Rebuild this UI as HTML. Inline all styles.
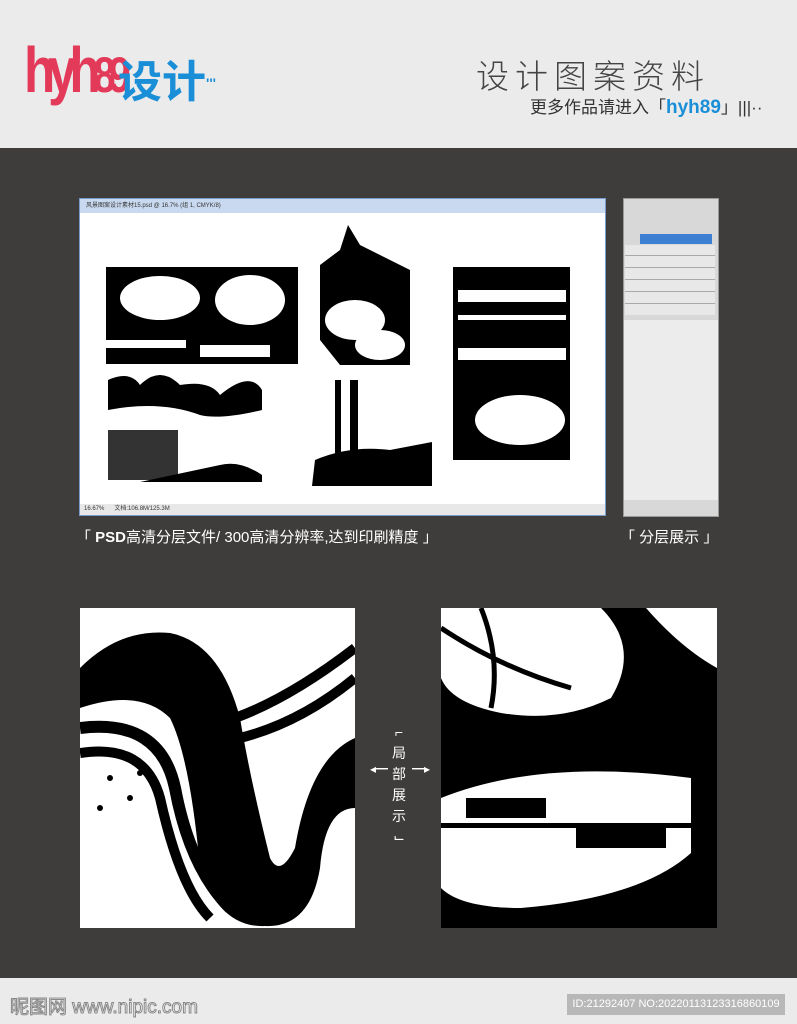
<!DOCTYPE html>
<html><head><meta charset="utf-8"><style>
html,body{margin:0;width:797px;height:1024px;overflow:hidden}
body{position:relative;background:#3f3d3b;font-family:"Liberation Sans","Noto Sans CJK SC",sans-serif}
.a{position:absolute}
</style></head><body>
<div class="a" style="left:0;top:0;width:797px;height:148px;background:#ebebeb"></div>
<div class="a" style="left:24px;top:30px;font-size:64px;font-weight:bold;color:#e33a5a;letter-spacing:-9px;line-height:80px;transform:scaleX(0.8);transform-origin:left">hyh<span style="font-size:50px">89</span></div>
<div class="a" style="left:118px;top:58px;font-size:44px;font-weight:bold;color:#1a8fd8;line-height:50px;white-space:nowrap">设计<span style="font-size:14px;vertical-align:top">'''</span></div>
<div class="a" style="left:476px;top:50px;font-size:33px;color:#444;letter-spacing:6px;font-family:'Noto Sans CJK SC',sans-serif;font-weight:300;white-space:nowrap">设计图案资料</div>
<div class="a" style="left:530px;top:93px;font-size:17px;color:#333;white-space:nowrap">更多作品请进入「<b style="color:#1a8fd8;font-size:19px">hyh89</b>」|||··</div>

<div class="a" style="left:79px;top:198px;width:527px;height:318px;background:#fff;border:1px solid #7a9ccc;box-sizing:border-box"></div>
<div class="a" style="left:80px;top:199px;width:525px;height:14px;background:#c9daf0;font-size:6px;color:#333;line-height:14px;padding-left:6px;box-sizing:border-box">风景图案设计素材15.psd @ 16.7% (组 1, CMYK/8)</div>
<div class="a" style="left:80px;top:504px;width:525px;height:11px;background:#e8e8e8;font-size:6px;color:#333;line-height:11px;padding-left:4px;box-sizing:border-box">16.67% &nbsp;&nbsp;&nbsp;&nbsp; 文档:106.8M/125.3M</div>
<svg class="a" style="left:100px;top:220px" width="480" height="275">
<rect x="6" y="47" width="192" height="97" fill="#000"/>
<ellipse cx="60" cy="78" rx="40" ry="22" fill="#fff"/><ellipse cx="150" cy="80" rx="35" ry="25" fill="#fff"/>
<rect x="6" y="120" width="80" height="8" fill="#fff"/><rect x="100" y="125" width="70" height="12" fill="#fff"/>
<path d="M220 45 L240 30 L248 5 L260 25 L290 40 L310 50 L310 145 L240 145 L220 120 Z" fill="#000"/>
<ellipse cx="255" cy="100" rx="30" ry="20" fill="#fff"/><ellipse cx="280" cy="125" rx="25" ry="15" fill="#fff"/>
<rect x="353" y="47" width="117" height="193" fill="#000"/>
<rect x="358" y="70" width="108" height="12" fill="#fff"/><rect x="358" y="128" width="108" height="12" fill="#fff"/><rect x="358" y="95" width="108" height="5" fill="#fff"/>
<ellipse cx="420" cy="200" rx="45" ry="25" fill="#fff"/>
<path d="M8 160 Q30 150 40 165 Q60 145 80 165 Q110 160 120 175 Q150 150 162 170 L162 190 Q120 200 100 195 Q60 180 8 190Z" fill="#000"/>
<rect x="8" y="210" width="70" height="50" fill="#000" opacity=".8"/>
<path d="M120 245 Q140 240 162 255 L162 262 L40 262Z" fill="#000"/>
<rect x="212" y="158" width="120" height="108" fill="#fff"/>
<path d="M215 240 Q250 225 290 230 L332 222 L332 266 L212 266Z" fill="#000"/>
<rect x="235" y="160" width="6" height="104" fill="#000"/><rect x="250" y="160" width="8" height="104" fill="#000"/>
</svg>
<div class="a" style="left:623px;top:198px;width:96px;height:319px;background:#d8d8d8;border:1px solid #999;box-sizing:border-box"></div>
<div class="a" style="left:640px;top:234px;width:72px;height:10px;background:#3d7fd3"></div>
<div class="a" style="left:625px;top:245px;width:90px;height:70px;background:repeating-linear-gradient(#e8e8e8 0 10px,#aaa 10px 11px,#e8e8e8 11px 12px)"></div>
<div class="a" style="left:624px;top:320px;width:94px;height:180px;background:#ececec"></div>
<div class="a" style="left:76px;top:526px;font-size:15px;color:#fff;white-space:nowrap">「 <b>PSD</b>高清分层文件/ 300高清分辨率,达到印刷精度 」</div>
<div class="a" style="left:620px;top:526px;font-size:15px;color:#fff;white-space:nowrap">「 分层展示 」</div>

<svg class="a" style="left:80px;top:608px" width="275" height="320">
<rect width="275" height="320" fill="#fff"/>
<path d="M0 60 Q40 20 90 25 Q140 35 160 110 Q170 170 190 250 Q200 270 215 240 Q230 150 275 130 L275 200 Q245 200 240 260 Q230 320 185 318 Q140 320 120 260 Q110 150 90 110 Q60 80 0 100Z" fill="#000"/>
<path d="M0 120 Q80 110 95 180 Q110 260 150 300" stroke="#000" stroke-width="12" fill="none"/>
<path d="M0 145 Q65 135 80 190 Q100 280 130 310" stroke="#000" stroke-width="10" fill="none"/>
<path d="M155 110 Q210 90 275 40 M160 130 Q220 115 275 70" stroke="#000" stroke-width="10" fill="none"/>
<circle cx="30" cy="170" r="3"/><circle cx="50" cy="190" r="3"/><circle cx="20" cy="200" r="3"/><circle cx="60" cy="165" r="3"/>
</svg>
<svg class="a" style="left:441px;top:608px" width="276" height="320">
<rect width="276" height="320" fill="#000"/>
<path d="M0 0 L160 0 Q200 40 170 90 Q120 115 60 105 Q10 95 0 70Z" fill="#fff"/>
<path d="M205 0 L276 0 L276 60 Q240 40 205 0Z" fill="#fff"/>
<path d="M0 190 Q100 150 250 170 L250 245 Q200 290 80 300 Q20 300 0 280Z" fill="#fff"/>
<rect x="0" y="215" width="250" height="5" fill="#000"/>
<rect x="25" y="190" width="80" height="20" fill="#000"/><rect x="135" y="215" width="90" height="25" fill="#000"/>
<path d="M0 20 Q60 60 130 80 M40 0 Q60 50 50 100" stroke="#000" stroke-width="5" fill="none"/>
</svg>
<div class="a" style="left:389px;top:722px;width:20px;font-size:14px;color:#fff;line-height:21px;text-align:center">⌐<br>局<br>部<br>展<br>示<br>⌙</div>
<div class="a" style="left:370px;top:760px;font-size:12px;color:#fff">◂━</div>
<div class="a" style="left:412px;top:760px;font-size:12px;color:#fff">━▸</div>

<div class="a" style="left:0;top:978px;width:797px;height:46px;background:#ebebeb"></div>
<div class="a" style="left:10px;top:992px;font-size:19px;color:#fff;-webkit-text-stroke:1px #888;white-space:nowrap">昵图网 www.nipic.com</div>
<div class="a" style="left:567px;top:994px;width:218px;height:21px;background:#b8b8b8;color:#fff;font-size:11px;line-height:21px;text-align:center;white-space:nowrap">ID:21292407 NO:20220113123316860109</div>
</body></html>
